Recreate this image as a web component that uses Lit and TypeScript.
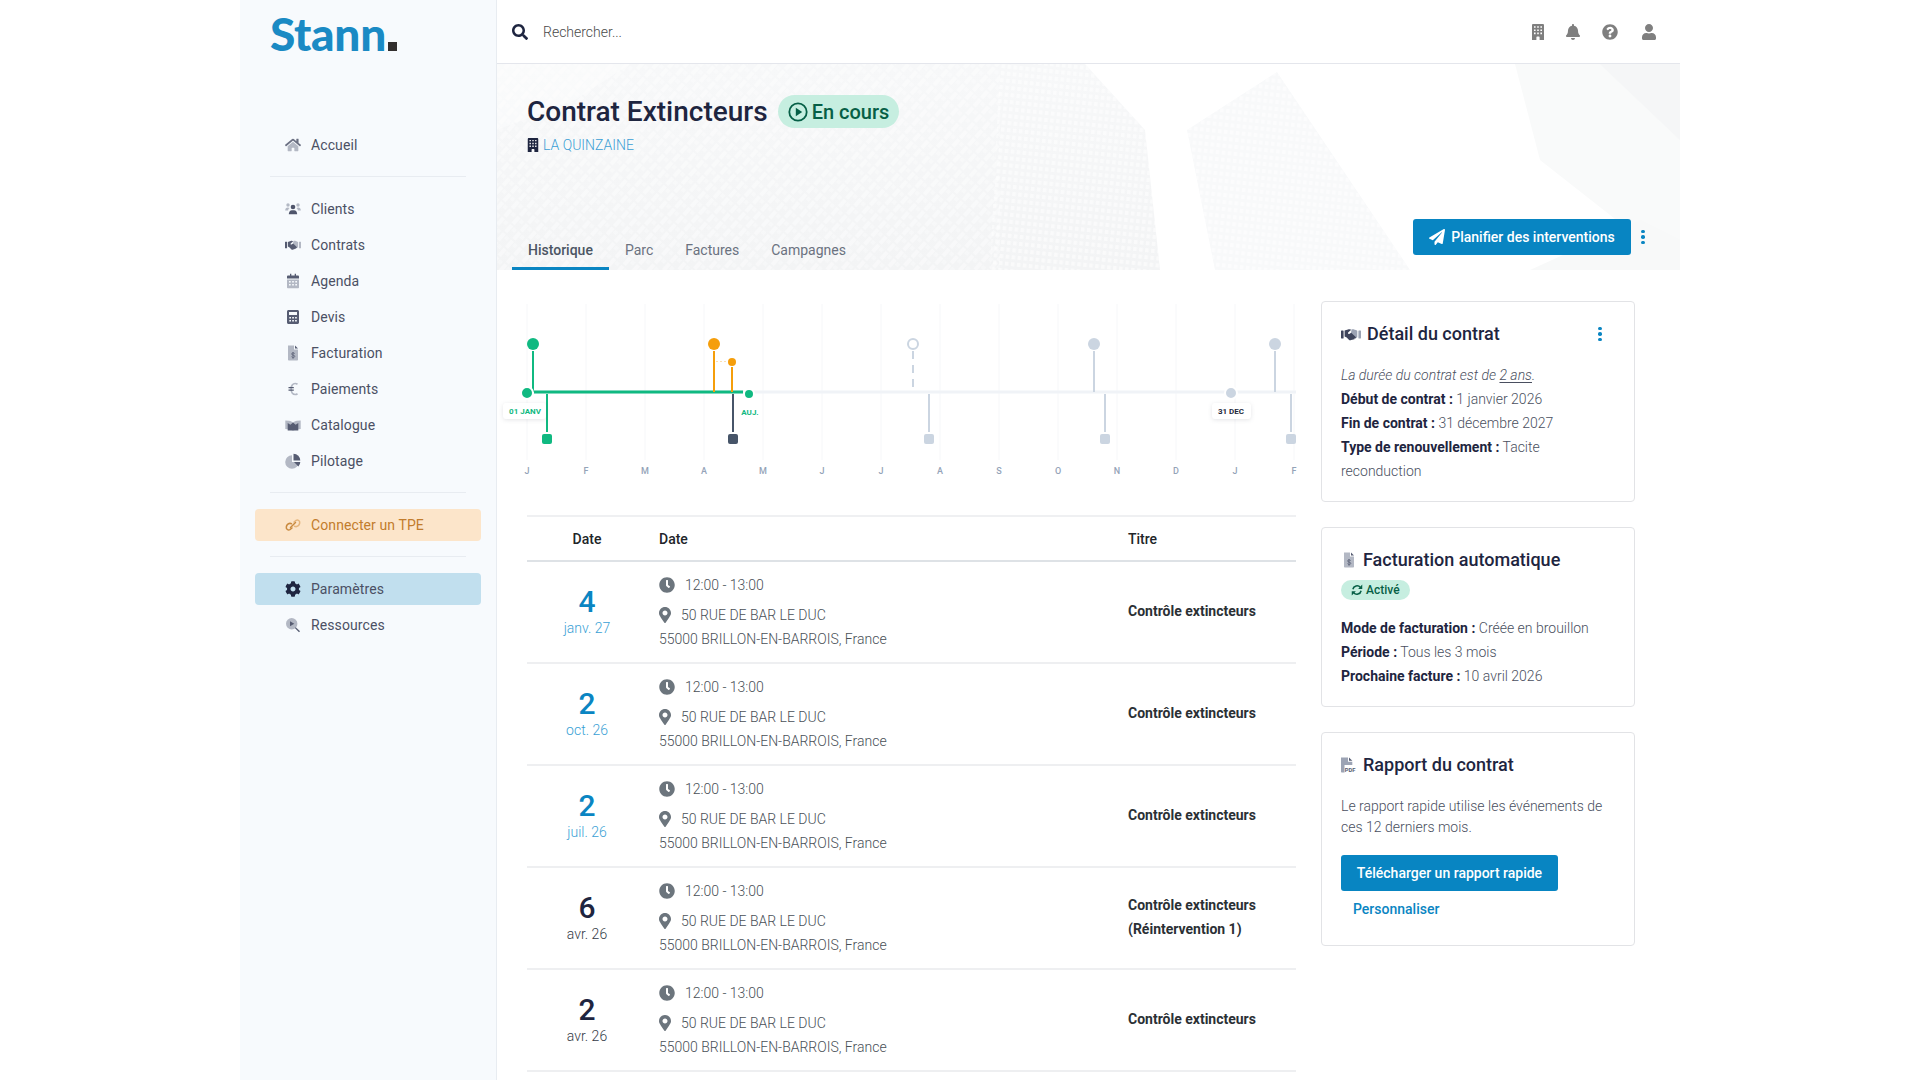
import { LitElement, html, css, svg } from "lit";
import { customElement } from "lit/decorators.js";

const P = {
  search: "M505 442.7L405.3 343c-4.5-4.5-10.6-7-17-7H372c27.6-35.3 44-79.7 44-128C416 93.1 322.9 0 208 0S0 93.1 0 208s93.1 208 208 208c48.3 0 92.7-16.4 128-44v16.3c0 6.4 2.5 12.5 7 17l99.7 99.7c9.4 9.4 24.6 9.4 33.9 0l28.3-28.3c9.4-9.4 9.4-24.6.1-34zM208 336c-70.7 0-128-57.2-128-128 0-70.7 57.2-128 128-128 70.7 0 128 57.2 128 128 0 70.7-57.2 128-128 128z",
  bell: "M224 512c35.32 0 63.97-28.65 63.97-64H160.03c0 35.35 28.65 64 63.97 64zm215.39-149.71c-19.32-20.76-55.47-51.99-55.47-154.29 0-77.7-54.48-139.9-127.94-155.16V32c0-17.67-14.32-32-31.98-32s-31.98 14.33-31.98 32v20.84C118.56 68.1 64.08 130.3 64.08 208c0 102.3-36.15 133.53-55.47 154.29-6 6.45-8.66 14.16-8.61 21.71.11 16.4 12.98 32 32.1 32h383.8c19.12 0 32-15.6 32.1-32 .05-7.55-2.61-15.27-8.61-21.71z",
  question: "M504 256c0 136.997-111.043 248-248 248S8 392.997 8 256C8 119.083 119.043 8 256 8s248 111.083 248 248zM262.655 90c-54.497 0-89.255 22.957-116.549 63.758-3.536 5.286-2.353 12.415 2.715 16.258l34.699 26.31c5.205 3.947 12.621 3.008 16.665-2.122 17.864-22.658 30.113-35.797 57.303-35.797 20.429 0 45.698 13.148 45.698 32.958 0 14.976-12.363 22.667-32.534 33.976C247.128 238.528 216 254.941 216 296v4c0 6.627 5.373 12 12 12h56c6.627 0 12-5.373 12-12v-1.333c0-28.462 83.186-29.647 83.186-106.667 0-58.002-60.165-102-116.531-102zM256 338c-25.365 0-46 20.635-46 46 0 25.364 20.635 46 46 46s46-20.636 46-46c0-25.365-20.635-46-46-46z",
  user: "M224 256c70.7 0 128-57.3 128-128S294.7 0 224 0 96 57.3 96 128s57.3 128 128 128zm89.6 32h-16.7c-22.2 10.2-46.9 16-72.9 16s-50.6-5.8-72.9-16h-16.7C60.2 288 0 348.2 0 422.4V464c0 26.5 21.5 48 48 48h352c26.5 0 48-21.5 48-48v-41.6c0-74.2-60.2-134.4-134.4-134.4z",
  plane: "M476 3.2L12.5 270.6c-18.1 10.4-15.8 35.6 2.2 43.2L121 358.4l287.3-253.2c5.5-4.9 13.3 2.6 8.6 8.3L176 407v80.5c0 23.6 28.5 32.9 42.5 15.8L282 426l124.6 52.2c14.2 6 30.4-2.9 33-18.2l72-432C515 7.8 493.3-6.8 476 3.2z",
  clock: "M256,8C119,8,8,119,8,256S119,504,256,504,504,393,504,256,393,8,256,8Zm92.49,313h0l-20,25a16,16,0,0,1-22.49,2.5h0l-67-49.72a40,40,0,0,1-15-31.23V112a16,16,0,0,1,16-16h32a16,16,0,0,1,16,16V256l58,42.5A16,16,0,0,1,348.49,321Z",
  pin: "M172.268 501.67C26.97 291.031 0 255.469 0 192 0 85.961 85.961 0 192 0s192 85.961 192 192c0 63.469-26.97 99.031-172.268 309.67-9.535 13.774-29.93 13.773-39.464 0zM192 272c44.183 0 80-35.817 80-80s-35.817-80-80-80-80 35.817-80 80 35.817 80 80 80z",
  cog: "M487.4 315.7l-42.6-24.6c4.3-23.2 4.3-47 0-70.2l42.6-24.6c4.9-2.8 7.1-8.6 5.5-14-11.1-35.6-30-67.8-54.7-94.6-3.8-4.1-10-5.1-14.8-2.3L380.8 110c-17.9-15.4-38.5-27.3-60.8-35.1V25.8c0-5.6-3.9-10.5-9.4-11.7-36.7-8.2-74.3-7.8-109.2 0-5.5 1.2-9.4 6.1-9.4 11.7V75c-22.2 7.9-42.8 19.8-60.8 35.1L88.7 85.5c-4.9-2.8-11-1.9-14.8 2.3-24.7 26.7-43.6 58.9-54.7 94.6-1.7 5.4.6 11.2 5.5 14L67.3 221c-4.3 23.2-4.3 47 0 70.2l-42.6 24.6c-4.9 2.8-7.1 8.6-5.5 14 11.1 35.6 30 67.8 54.7 94.6 3.8 4.1 10 5.1 14.8 2.3l42.6-24.6c17.9 15.4 38.5 27.3 60.8 35.1v49.2c0 5.6 3.9 10.5 9.4 11.7 36.7 8.2 74.3 7.8 109.2 0 5.5-1.2 9.4-6.1 9.4-11.7v-49.2c22.2-7.9 42.8-19.8 60.8-35.1l42.6 24.6c4.9 2.8 11 1.9 14.8-2.3 24.7-26.7 43.6-58.9 54.7-94.6 1.5-5.5-.7-11.3-5.6-14.1zM256 336c-44.1 0-80-35.9-80-80s35.9-80 80-80 80 35.9 80 80-35.9 80-80 80z",
  home: "M280.37 148.26L96 300.11V464a16 16 0 0 0 16 16l112.06-.29a16 16 0 0 0 15.92-16V368a16 16 0 0 1 16-16h64a16 16 0 0 1 16 16v95.64a16 16 0 0 0 16 16.05L464 480a16 16 0 0 0 16-16V300L295.67 148.26a12.19 12.19 0 0 0-15.3 0z",
  homeRoof: "M571.6 251.47L488 182.56V44.05a12 12 0 0 0-12-12h-56a12 12 0 0 0-12 12v72.61L318.47 43a48 48 0 0 0-61 0L4.34 251.47a12 12 0 0 0-1.6 16.9l25.5 31A12 12 0 0 0 45.15 301l235.22-193.74a12.19 12.19 0 0 1 15.3 0L530.9 301a12 12 0 0 0 16.9-1.6l25.5-31a12 12 0 0 0-1.7-16.93z",
  building: "M2 1.2C2 .5 2.5 0 3.2 0h9.6c.7 0 1.2.5 1.2 1.2V16H9.6v-2.8c0-.4-.3-.7-.7-.7H7.1c-.4 0-.7.3-.7.7V16H2zM4 2.2v1.6h1.6V2.2zm3.2 0v1.6h1.6V2.2zm3.2 0v1.6H12V2.2zM4 5.4V7h1.6V5.4zm3.2 0V7h1.6V5.4zm3.2 0V7H12V5.4zM4 8.6v1.6h1.6V8.6zm3.2 0v1.6h1.6V8.6zm3.2 0v1.6H12V8.6z",
};

const ic = (d: string, vb: string, cls = "") => html`<svg class="ic ${cls}" viewBox=${vb} fill="currentColor" aria-hidden="true"><path d=${d} fill-rule="evenodd"></path></svg>`;

const handshake = (dark: string, light: string) => svg`
  <rect x="0" y="3.5" width="2.6" height="8" rx=".4" fill=${dark}></rect>
  <rect x="17.4" y="3.5" width="2.6" height="8" rx=".4" fill=${light}></rect>
  <path d="M10.5 2.5c1.6-.5 3.3.2 5.8 1.2v6.5l-2.3 1.6-4.3-3.4z" fill=${light}></path>
  <path d="M3.6 3.6 7 2.4c1.4-.4 2.4-.2 3.3.4L7.4 5.2c-.9.8-.2 2 .8 1.7l2-1.2 4.5 4.2c.6.7-.2 1.6-1 1.1l-.2.9c-.3.7-1.1.7-1.5.3-.2.8-1.2 1-1.7.5-.4.7-1.5.9-2.2.3L5.7 10.500 3.600 9.500z" fill=${dark}></path>`;

const NAV_ICONS: Record<string, unknown> = {
  home: html`<svg class="ic" viewBox="0 0 576 512"><path d=${P.home} fill="#b3b8c4"></path><path d=${P.homeRoof} fill="#6b7083"></path></svg>`,
  users: html`<svg class="ic" viewBox="0 0 16 16">
      <circle cx="3" cy="4" r="1.700" fill="#b3b8c4"></circle><circle cx="13" cy="4" r="1.700" fill="#b3b8c4"></circle>
      <path d="M.2 9.500c0-2 1-3 2.600-3 .7 0 1.300.2 1.800.6-.9.600-1.400 1.400-1.500 2.400zM15.800 9.500c0-2-1-3-2.600-3-.7 0-1.300.2-1.800.6.900.600 1.400 1.400 1.500 2.400z" fill="#b3b8c4"></path>
      <circle cx="8" cy="6" r="2.300" fill="#4f556b"></circle>
      <path d="M3.800 13.300c0-2.500 1.500-4.100 3-4.100h2.400c1.500 0 3 1.600 3 4.100z" fill="#4f556b"></path></svg>`,
  hands: html`<svg class="ic" viewBox="0 0 20 15" style="width:16px">${handshake("#565c72", "#b3b8c4")}</svg>`,
  cal: html`<svg class="ic" viewBox="0 0 16 16">
      <path d="M2 6.500h12v7.700c0 .6-.5 1.100-1.100 1.100H3.100c-.6 0-1.100-.5-1.100-1.100z" fill="#b3b8c4"></path>
      <path d="M3.100 2.400H5V.8h1.300v1.600h3.400V.8H11v1.600h1.900c.6 0 1.100.5 1.100 1.100V5.500H2V3.500c0-.6.5-1.100 1.100-1.100z" fill="#565c72"></path>
      <path d="M4 8h1.700v1.500H4zM7.150 8h1.700v1.500h-1.700zM10.300 8H12v1.500h-1.700zM4 11h1.700v1.500H4zM7.150 11h1.700v1.500h-1.700zM10.300 11H12v1.500h-1.700z" fill="#f7fafd"></path></svg>`,
  calc: html`<svg class="ic" viewBox="0 0 16 16"><path fill-rule="evenodd" fill="#565c72" d="M3.500 1h9c.8 0 1.500.7 1.500 1.500v11c0 .8-.7 1.500-1.500 1.500h-9C2.700 15 2 14.300 2 13.500v-11C2 1.700 2.700 1 3.500 1zM4 3v3h8V3zm.3 5v1.500h1.700V8zm2.900 0v1.500h1.700V8zm2.900 0v1.500h1.700V8zm-5.800 3v1.500h1.700V11zm2.900 0v1.500h1.700V11zm2.900 0v1.500h1.700V11z"></path></svg>`,
  invoice: html`<svg class="ic" viewBox="0 0 16 16"><path d="M3 .5h6v4h4v10.200c0 .4-.3.8-.8.8H3.800c-.5 0-.8-.4-.8-.8z" fill="#b3b8c4"></path><path d="M10 .5 13 3.500h-3z" fill="#565c72"></path><path d="M9.700 8.600c-.3-.5-.9-.7-1.600-.7-.8 0-1.500.4-1.500 1.100 0 1.500 3.200.8 3.200 2.300 0 .7-.7 1.100-1.700 1.100-.7 0-1.300-.3-1.600-.8M8 7v6.800" fill="none" stroke="#565c72" stroke-width=".8"></path></svg>`,
  euro: html`<svg class="ic" viewBox="0 0 16 16"><path d="M12.500 3.300c-.7-.5-1.500-.8-2.400-.8-2.300 0-4 2.300-4 5.500s1.700 5.500 4 5.500c.9 0 1.700-.3 2.400-.8" fill="none" stroke="#b3b8c4" stroke-width="1.700"></path><path d="M3.500 6.600h5.300M3.500 9.200h5.300" stroke="#565c72" stroke-width="1.300"></path></svg>`,
  book: html`<svg class="ic" viewBox="0 0 16 16"><path d="M.3 3.500 4 3.800C5.800 4 7.200 4.700 8 5.600c.8-.9 2.200-1.600 4-1.800l3.700-.3V12c-3 .1-5.800.6-7.700 1.700-1.900-1.100-4.700-1.600-7.700-1.700z" fill="#b3b8c4"></path><path d="M2.700 6 5.400 7.800 8 5.400l2.600 2.400L13.300 6v7.500H2.700z" fill="#565c72"></path></svg>`,
  pie: html`<svg class="ic" viewBox="0 0 16 16"><path d="M7 2.200A6.800 6.800 0 1 0 13.800 9H7z" fill="#b3b8c4"></path><path d="M8.500 .7A6.800 6.800 0 0 1 15.300 7.500H8.500z" fill="#565c72"></path><path d="M9 9h6.300a6.800 6.800 0 0 1-1.900 4.500z" fill="#565c72"></path></svg>`,
  link: html`<svg class="ic" viewBox="0 0 16 16"><g fill="none" stroke-width="1.500" stroke-linecap="round"><path d="M6.500 6.800 5 6.200C3.300 6.600 1.500 8.300 1.300 10c-.3 2.300 1.800 3.500 3.600 2.600L7 11" stroke="#c98a3f"></path><path d="M9.500 9.200 11 9.800C12.700 9.400 14.500 7.700 14.700 6c.3-2.300-1.800-3.500-3.600-2.600L9 5" stroke="#e5b57c"></path><path d="M5.500 10.500 10.500 5.500" stroke="#c98a3f"></path></g></svg>`,
  cog: html`<svg class="ic" viewBox="0 0 512 512"><path d=${P.cog} fill="#1e2540"></path></svg>`,
  res: html`<svg class="ic" viewBox="0 0 16 16"><circle cx="6.700" cy="6.700" r="5.700" fill="#b3b8c4"></circle><path d="M10.800 10.200 15 14.300l-1 1-4.200-4.200z" fill="#565c72"></path><path d="M5 4.200 9.300 6.700 5 9.200z" fill="#565c72"></path></svg>`,
};

const NAV_A = [
  ["Clients", "users"], ["Contrats", "hands"], ["Agenda", "cal"], ["Devis", "calc"],
  ["Facturation", "invoice"], ["Paiements", "euro"], ["Catalogue", "book"], ["Pilotage", "pie"],
];

const ROWS = [
  { d: "4", m: "janv. 27", future: true },
  { d: "2", m: "oct. 26", future: true },
  { d: "2", m: "juil. 26", future: true },
  { d: "6", m: "avr. 26", future: false, t2: "(Réintervention 1)" },
  { d: "2", m: "avr. 26", future: false },
];

const MONTHS = "JFMAMJJASONDJF".split("");
const G = "#10b981", O = "#f59e0b", S = "#cbd5e1", D = "#475569";

function timeline() {
  const top = (x: number, c: string) => svg`
    <circle cx=${x} cy="344" r="6" fill=${c}></circle>
    <rect x=${x - 1} y="351" width="2" height="41" fill=${c}></rect>`;
  const bottom = (x: number, sx: number, c: string) => svg`
    <rect x=${x - 1} y="394" width="2" height="38" fill=${c}></rect>
    <rect x=${sx - 5} y="434" width="10" height="10" rx="2" fill=${c}></rect>`;
  return svg`
    ${MONTHS.map((m, i) => {
      const x = 527 + i * 59;
      return svg`<line x1=${x} x2=${x} y1="304" y2="460" stroke="#f6f7f9"></line>
        <text x=${x} y="474" class="mo">${m}</text>`;
    })}
    <rect x="533" y="390.500" width="763" height="3" fill="#f0f3f7"></rect>
    <rect x="534" y="390.500" width="209" height="3" fill=${G}></rect>
    ${top(533, G)}
    ${top(714, O)}
    ${top(1094, S)}
    ${top(1275, S)}
    <circle cx="732" cy="362" r="4" fill=${O}></circle>
    <rect x="731" y="367" width="2" height="25" fill=${O}></rect>
    <line x1="716" x2="727" y1="361.500" y2="361.500" stroke="#fbd79b" stroke-width=".8" stroke-dasharray="2 2"></line>
    <circle cx="913" cy="344" r="5" fill="#fff" stroke=${S} stroke-width="2"></circle>
    <line x1="913" x2="913" y1="351" y2="391" stroke=${S} stroke-width="2" stroke-dasharray="8 6"></line>
    ${bottom(547, 547, G)}
    ${bottom(733, 733, D)}
    ${bottom(929, 929, S)}
    ${bottom(1105, 1105, S)}
    ${bottom(1291, 1291, S)}
    <circle cx="527" cy="393" r="6" fill=${G} stroke="#fff" stroke-width="2"></circle>
    <circle cx="749" cy="394" r="5" fill=${G} stroke="#fff" stroke-width="2"></circle>
    <circle cx="1231" cy="393" r="6" fill=${S} stroke="#fff" stroke-width="2"></circle>
    <rect x="503" y="403" width="43" height="16" rx="3" fill="#fff" class="pill"></rect>
    <text x="525" y="414" class="lbl" fill=${G}>01 JANV</text>
    <text x="750" y="415" class="lbl" fill=${G}>AUJ.</text>
    <rect x="1212" y="403" width="39" height="16" rx="3" fill="#fff" class="pill"></rect>
    <text x="1231" y="414" class="lbl" fill="#1e293b">31 DEC</text>`;
}

function heroArt() {
  return svg`
    <defs>
      <pattern id="dia" width="11" height="11" patternUnits="userSpaceOnUse" patternTransform="rotate(42)">
        <rect x="1" y="1" width="4" height="9" fill="#fff" opacity=".4"></rect>
        <rect x="6" y="1" width="4" height="4" fill="#fff" opacity=".28"></rect>
      </pattern>
      <pattern id="win" width="6" height="7" patternUnits="userSpaceOnUse" patternTransform="rotate(6)">
        <rect x="1" y="1" width="3.500" height="4" fill="#fff" opacity=".55"></rect>
      </pattern>
      <linearGradient id="fade" x1="0" y1="0" x2="0" y2="1"><stop offset="0" stop-color="#f7f8f9"></stop><stop offset="1" stop-color="#f3f4f5"></stop></linearGradient>
    </defs>
    <rect x="497" y="64" width="1183" height="206" fill="#fff"></rect>
    <polygon points="497,64 1085,64 1145,130 1160,270 497,270" fill="url(#fade)"></polygon>
    <polygon points="497,64 1000,64 1000,270 497,270" fill="url(#dia)"></polygon>
    <polygon points="497,64 630,64 575,100 497,130" fill="#fff" opacity=".4"></polygon>
    <polygon points="1000,64 1085,64 1145,130 1160,270 990,270" fill="url(#win)"></polygon>
    <polygon points="1277,72 1187,130 1215,270 1410,270" fill="#f8f9fa"></polygon>
    <polygon points="1277,72 1187,130 1215,270 1410,270" fill="url(#win)"></polygon>
    <polygon points="1515,64 1540,160 1680,270 1680,64" fill="#f9fafa"></polygon>
    <polygon points="1600,64 1680,64 1680,140" fill="#f5f6f7"></polygon>
    <polygon points="1530,270 1640,220 1680,240 1680,270" fill="#f8f9f9"></polygon>`;
}

@customElement("app-root")
export class AppRoot extends LitElement {
  static styles = css`
    :host { display: block; width: 1440px; height: 1080px; margin: 0 auto; overflow: hidden; background: #fff; font-family: Roboto, "Liberation Sans", sans-serif; color: #1e2540; font-size: 14px; }
    * { box-sizing: border-box; }
    .ic { display: block; width: 16px; height: 16px; flex: none; }
    .shell { display: flex; height: 100%; }
    aside { width: 257px; flex: none; background: #f7fafd; border-right: 1px solid #e8ecf1; }
    .logo { height: 127px; padding: 6px 0 0 30px; display: flex; align-items: flex-start; }
    .logo b { font-family: Lato, sans-serif; font-weight: 900; font-size: 46px; line-height: 56px; color: #1a8ac4; letter-spacing: -.3px; }
    .logo i { display: block; width: 9px; height: 9px; background: #322f2e; margin: 36px 0 0 2px; }
    nav { display: flex; flex-direction: column; }
    .item { height: 32px; margin: 2px 15px; padding-left: 30px; border-radius: 4px; display: flex; align-items: center; gap: 10px; color: #4b5064; font-weight: 400; letter-spacing: .1px; }
    .item.warn { background: #fce5ca; color: #c27c2c; }
    .item.on { background: #c1dfee; }
    .sep { height: 1px; background: #e8ecf1; margin: 13px 30px 14px; }
    main { flex: 1; min-width: 0; }
    header { height: 64px; border-bottom: 1px solid #e4e6ec; display: flex; align-items: center; padding: 0 23px 0 15px; }
    .srch { display: flex; align-items: center; gap: 15px; flex: 1; color: #4a4a4a; font-weight: 300; }
    .srch .ic { color: #1e2540; }
    .tools { display: flex; align-items: center; color: #7f7f7f; }
    .tools .ic { height: 16px; }
    .tools .bell { width: 14px; margin-left: 20px; }
    .tools .q { width: 16px; margin-left: 22px; }
    .tools .u { width: 16px; margin-left: 23px; }
    .hero { height: 206px; position: relative; display: flex; flex-direction: column; }
    .art { position: absolute; inset: 0; width: 100%; height: 100%; }
    .hero > div { position: relative; }
    .head { padding: 31px 30px 0; }
    .tline { display: flex; align-items: center; gap: 10px; height: 33px; }
    h1 { margin: 0; font-size: 28px; font-weight: 500; color: #1e2540; line-height: 33px; }
    .badge { display: inline-flex; align-items: center; gap: 4px; background: #c6eee0; color: #065f46; border-radius: 17px; height: 33px; padding: 0 10px; font-size: 20px; font-weight: 500; }
    .badge .ic { width: 20px; height: 20px; }
    .site { display: flex; align-items: center; gap: 4px; margin-top: 8px; height: 18px; color: #3a9fd5; font-weight: 300; }
    .site .ic { width: 12px; height: 14px; color: #1e2540; margin-right: 0; }
    .bar { margin-top: auto; display: flex; justify-content: space-between; align-items: flex-end; padding: 0 36px 0 15px; }
    .tabs { display: flex; }
    .tab { padding: 0 16px; height: 37px; display: flex; align-items: center; color: #6b7280; font-weight: 400; border-bottom: 3px solid transparent; }
    .tab.on { font-weight: 500; color: #4b5563; border-bottom-color: #0a85c2; }
    .acts { display: flex; align-items: center; gap: 10px; margin-bottom: 15px; }
    .btn { display: inline-flex; align-items: center; justify-content: center; gap: 6px; height: 36px; background: #0885c2; color: #fff; font-weight: 500; border-radius: 3px; }
    .btn.plan { width: 218px; }
    .btn.plan .ic { width: 16px; height: 16px; }
    .dots { width: 3px; display: flex; flex-direction: column; gap: 2px; }
    .dots span { width: 3.5px; height: 3.5px; border-radius: 50%; background: #0a85c2; }
    .body { display: flex; padding-left: 30px; }
    .left { width: 769px; flex: none; padding-top: 20px; }
    .chart { display: block; width: 769px; height: 225px; overflow: visible; }
    .chart .mo { font: 500 9px Roboto, sans-serif; fill: #94a3b8; text-anchor: middle; }
    .chart .lbl { font: 700 8px Roboto, sans-serif; text-anchor: middle; }
    .chart .pill { filter: drop-shadow(0 1px 2px rgba(30,41,59,.12)); }
    .row { display: grid; grid-template-columns: 120px 481px 168px; border-bottom: 2px solid #eeeff1; }
    .row.th { height: 47px; border-top: 2px solid #eff0f2; border-bottom-color: #dee2e6; align-items: center; font-weight: 500; color: #212529; }
    .row.th > :first-child { text-align: center; }
    .row.th > :nth-child(2) { padding-left: 12px; }
    .row.tr { height: 102px; }
    .date { display: flex; flex-direction: column; align-items: center; justify-content: center; padding-bottom: 2px; }
    .date b { font-size: 30px; line-height: 34px; font-weight: 500; color: #1e2540; }
    .date span { line-height: 18px; font-weight: 300; color: #343a46; }
    .future b { color: #0a85c2; }
    .future span { color: #3a9fd5; }
    .info { padding: 11px 0 0 12px; line-height: 24px; color: #495057; font-weight: 300; }
    .ln { display: flex; align-items: center; height: 24px; }
    .ln.time { gap: 10px; margin-bottom: 6px; }
    .ln.addr { gap: 10px; }
    .ln .ic { color: #6c757d; }
    .ln.addr .ic { width: 12px; height: 16px; }
    .ti { align-self: center; line-height: 24px; font-weight: 700; color: #2b3035; padding-bottom: 2px; }
    .right { width: 314px; margin-left: 25px; padding-top: 31px; display: flex; flex-direction: column; gap: 25px; flex: none; }
    .card { border: 1px solid #e2e3e6; border-radius: 4px; padding: 21px 19px 0; position: relative; }
    .c1 { height: 201px; }
    .c2 { height: 180px; }
    .c3 { height: 214px; }
    .ct { display: flex; align-items: center; gap: 6px; height: 22px; font-size: 18px; font-weight: 500; color: #1e2540; line-height: 22px; }
    .ct .dots { margin-left: auto; margin-right: 14px; }
    .txt { line-height: 24px; font-weight: 300; color: #4a4f60; }
    .txt b { font-weight: 700; color: #1e2540; }
    .txt u { text-underline-offset: 2px; }
    .c1 .txt { margin-top: 18px; }
    .act { display: inline-flex; align-items: center; gap: 3px; margin-top: 9px; height: 20px; padding: 0 10px; border-radius: 10px; background: #c6eee0; color: #065f46; font-size: 12px; font-weight: 500; }
    .act .ic { width: 12px; height: 12px; }
    .c2 .txt { margin-top: 16px; }
    .c3 p { margin: 20px 0 17px; line-height: 21px; font-weight: 300; color: #4a4f60; }
    .btn.dl { width: 217px; }
    .more { display: block; margin: 8px 0 0 12px; line-height: 20px; font-weight: 500; color: #0a85c2; }
  `;

  render() {
    const item = (label: string, icon: string, cls = "") => html`<div class="item ${cls}">${NAV_ICONS[icon]}<span>${label}</span></div>`;
    const dots = html`<div class="dots"><span></span><span></span><span></span></div>`;
    return html`<div class="shell">
      <aside>
        <div class="logo"><b>Stann</b><i></i></div>
        <nav>
          ${item("Accueil", "home")}
          <div class="sep"></div>
          ${NAV_A.map(([l, i]) => item(l, i))}
          <div class="sep"></div>
          ${item("Connecter un TPE", "link", "warn")}
          <div class="sep"></div>
          ${item("Paramètres", "cog", "on")}
          ${item("Ressources", "res")}
        </nav>
      </aside>
      <main>
        <header>
          <div class="srch">${ic(P.search, "0 0 512 512")}<span>Rechercher...</span></div>
          <div class="tools">
            ${ic(P.building, "0 0 16 16")}
            ${ic(P.bell, "0 0 448 512", "bell")}
            ${ic(P.question, "0 0 512 512", "q")}
            ${ic(P.user, "0 0 448 512", "u")}
          </div>
        </header>
        <section class="hero">
          <svg class="art" viewBox="497 64 1183 206" preserveAspectRatio="none">${heroArt()}</svg>
          <div class="head">
            <div class="tline">
              <h1>Contrat Extincteurs</h1>
              <span class="badge"><svg class="ic" viewBox="0 0 20 20"><circle cx="10" cy="10" r="8.700" fill="none" stroke="currentColor" stroke-width="1.800"></circle><path d="M7.800 5.800 14.200 10l-6.400 4.200z" fill="currentColor"></path></svg>En cours</span>
            </div>
            <div class="site">${ic(P.building, "2 0 12 16")}<span>LA QUINZAINE</span></div>
          </div>
          <div class="bar">
            <div class="tabs">
              <div class="tab on">Historique</div><div class="tab">Parc</div><div class="tab">Factures</div><div class="tab">Campagnes</div>
            </div>
            <div class="acts">
              <div class="btn plan">${ic(P.plane, "0 0 512 512")}<span>Planifier des interventions</span></div>
              ${dots}
            </div>
          </div>
        </section>
        <div class="body">
          <div class="left">
            <svg class="chart" viewBox="527 290 769 225">${timeline()}</svg>
            <div class="row th"><div>Date</div><div>Date</div><div>Titre</div></div>
            ${ROWS.map((r) => html`<div class="row tr">
              <div class="date ${r.future ? "future" : ""}"><b>${r.d}</b><span>${r.m}</span></div>
              <div class="info">
                <div class="ln time">${ic(P.clock, "0 0 512 512")}<span>12:00 - 13:00</span></div>
                <div class="ln addr">${ic(P.pin, "0 0 384 512")}<span>50 RUE DE BAR LE DUC</span></div>
                <div>55000 BRILLON-EN-BARROIS, France</div>
              </div>
              <div class="ti">Contrôle extincteurs${r.t2 ? html`<br />${r.t2}` : ""}</div>
            </div>`)}
          </div>
          <div class="right">
            <div class="card c1">
              <div class="ct"><svg class="ic" style="width:20px;height:15px" viewBox="0 0 20 15">${handshake("#3f455c", "#9ca3b4")}</svg><span>Détail du contrat</span>${dots}</div>
              <div class="txt">
                <em>La durée du contrat est de <u>2 ans</u>.</em><br />
                <b>Début de contrat :</b> 1 janvier 2026<br />
                <b>Fin de contrat :</b> 31 décembre 2027<br />
                <b>Type de renouvellement :</b> Tacite reconduction
              </div>
            </div>
            <div class="card c2">
              <div class="ct">${NAV_ICONS.invoice}<span>Facturation automatique</span></div>
              <div class="act"><svg class="ic" viewBox="0 0 16 16"><g fill="none" stroke="currentColor" stroke-width="2"><path d="M2.500 7a5.700 5.700 0 0 1 10-2.500"></path><path d="M13.500 9a5.700 5.700 0 0 1-10 2.500"></path></g><path d="M15 .8V6.500H9.500zM1 15.200V9.500h5.500z" fill="currentColor"></path></svg><span>Activé</span></div>
              <div class="txt">
                <b>Mode de facturation :</b> Créée en brouillon<br />
                <b>Période :</b> Tous les 3 mois<br />
                <b>Prochaine facture :</b> 10 avril 2026
              </div>
            </div>
            <div class="card c3">
              <div class="ct"><svg class="ic" viewBox="0 0 16 16"><path d="M0 .5h7v4.300h4.300V8H3.500v7.500H1c-.6 0-1-.4-1-1z" fill="#9ca3b4"></path><path d="M8 .5 11.300 3.800H8z" fill="#565c72"></path><text x="3.800" y="14.500" font-family="Roboto" font-size="5.800" font-weight="700" fill="#565c72">PDF</text></svg><span style="margin-left:0">Rapport du contrat</span></div>
              <p>Le rapport rapide utilise les événements de ces 12 derniers mois.</p>
              <div class="btn dl">Télécharger un rapport rapide</div>
              <a class="more">Personnaliser</a>
            </div>
          </div>
        </div>
      </main>
    </div>`;
  }
}
